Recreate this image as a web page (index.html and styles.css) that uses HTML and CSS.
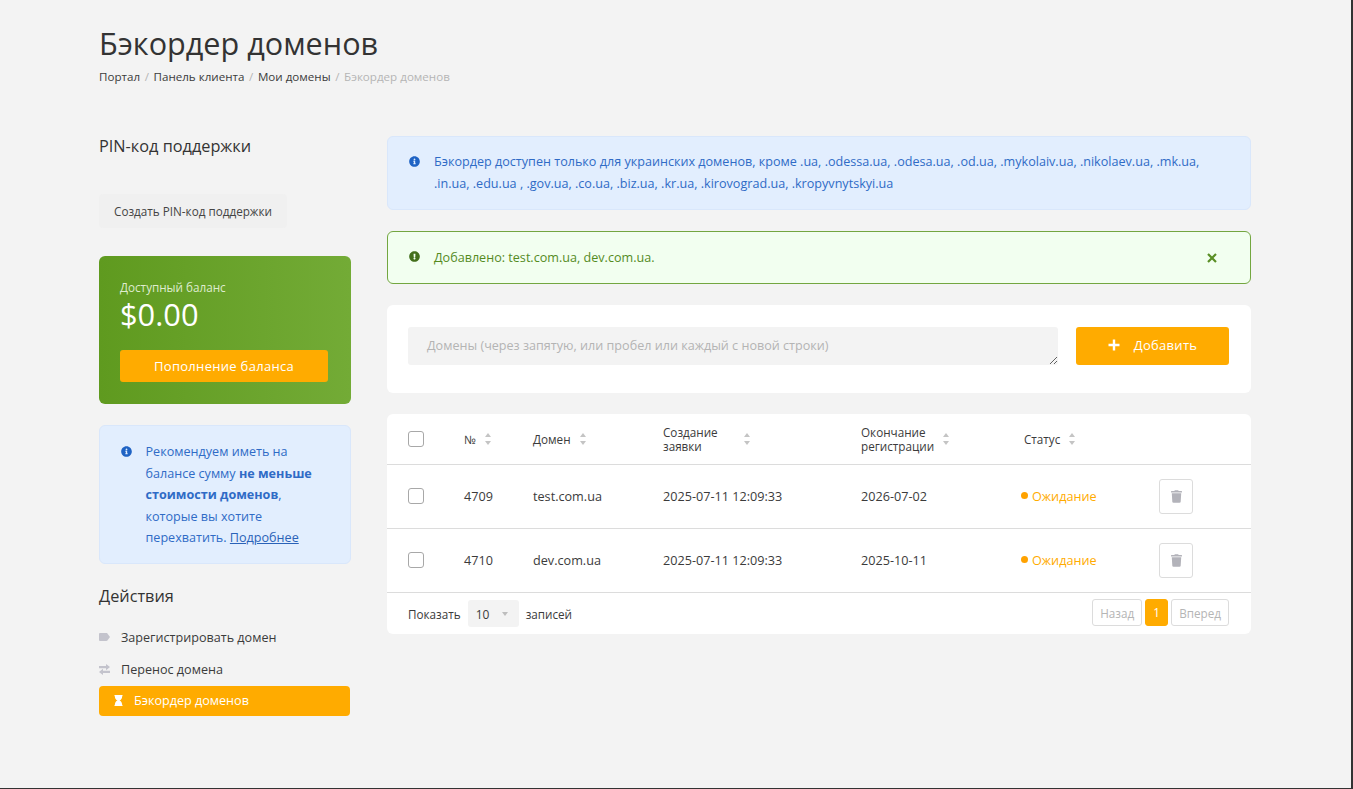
FILE: index.html
```html
<!DOCTYPE html>
<html lang="ru">
<head>
<meta charset="utf-8">
<title>Бэкордер доменов</title>
<link rel="stylesheet" href="styles.css">
</head>
<body>
<div class="page">
  <header class="head">
    <h1 class="title">Бэкордер доменов</h1>
    <nav class="crumbs">
      <a>Портал</a><span class="sep">/</span><a>Панель клиента</a><span class="sep">/</span><a>Мои домены</a><span class="sep">/</span><span class="cur">Бэкордер доменов</span>
    </nav>
  </header>
  <div class="layout">
    <aside class="side">
      <h2 class="side-h pin-h">PIN-код поддержки</h2>
      <button class="pin-btn">Создать PIN-код поддержки</button>
      <section class="balance">
        <div class="bal-label">Доступный баланс</div>
        <div class="bal-value">$0.00</div>
        <button class="bal-btn">Пополнение баланса</button>
      </section>
      <section class="side-note">
        <svg class="ic-info" viewBox="0 0 512 512"><path d="M256 8C119.043 8 8 119.083 8 256c0 136.997 111.043 248 248 248s248-111.003 248-248C504 119.083 392.957 8 256 8zm0 110c23.196 0 42 18.804 42 42s-18.804 42-42 42-42-18.804-42-42 18.804-42 42-42zm56 254c0 6.627-5.373 12-12 12h-88c-6.627 0-12-5.373-12-12v-24c0-6.627 5.373-12 12-12h12v-64h-12c-6.627 0-12-5.373-12-12v-24c0-6.627 5.373-12 12-12h64c6.627 0 12 5.373 12 12v100h12c6.627 0 12 5.373 12 12v24z"/></svg>
        <p>Рекомендуем иметь на балансе сумму <b>не меньше стоимости доменов</b>, которые вы хотите перехватить. <a>Подробнее</a></p>
      </section>
      <h2 class="side-h act-h">Действия</h2>
      <ul class="menu">
        <li class="mi">
          <svg class="mi-ic" viewBox="0 0 14 10"><path d="M1.2 0h8.3c.5 0 .9.2 1.2.5L14 5l-3.3 4.500c-.3.3-.7.5-1.200.5H1.200C.5 10 0 9.500 0 8.800V1.200C0 .5.5 0 1.200 0z"/></svg>
          <span>Зарегистрировать домен</span>
        </li>
        <li class="mi">
          <svg class="mi-ex" viewBox="0 0 11 11"><path d="M0 2h7V0l4 3.100-4 3.100V4.200H0zM11 6.800H4V4.800L0 7.900 4 11V9h7z"/></svg>
          <span>Перенос домена</span>
        </li>
        <li class="mi mi-active">
          <svg class="mi-glass" viewBox="0 0 384 512"><path d="M360 0H24C10.745 0 0 10.745 0 24v16c0 13.255 10.745 24 24 24 0 90.965 51.016 167.734 120.842 192C75.016 280.266 24 357.035 24 448c-13.255 0-24 10.745-24 24v16c0 13.255 10.745 24 24 24h336c13.255 0 24-10.745 24-24v-16c0-13.255-10.745-24-24-24 0-90.965-51.016-167.734-120.842-192C308.984 231.734 360 154.965 360 64c13.255 0 24-10.745 24-24V24c0-13.255-10.745-24-24-24z"/></svg>
          <span>Бэкордер доменов</span>
        </li>
      </ul>
    </aside>
    <main class="main">
      <div class="alert alert-info">
        <svg class="ic-info" viewBox="0 0 512 512"><path d="M256 8C119.043 8 8 119.083 8 256c0 136.997 111.043 248 248 248s248-111.003 248-248C504 119.083 392.957 8 256 8zm0 110c23.196 0 42 18.804 42 42s-18.804 42-42 42-42-18.804-42-42 18.804-42 42-42zm56 254c0 6.627-5.373 12-12 12h-88c-6.627 0-12-5.373-12-12v-24c0-6.627 5.373-12 12-12h12v-64h-12c-6.627 0-12-5.373-12-12v-24c0-6.627 5.373-12 12-12h64c6.627 0 12 5.373 12 12v100h12c6.627 0 12 5.373 12 12v24z"/></svg>
        <p>Бэкордер доступен только для украинских доменов, кроме .ua, .odessa.ua, .odesa.ua, .od.ua, .mykolaiv.ua, .nikolaev.ua, .mk.ua, .in.ua, .edu.ua , .gov.ua, .co.ua, .biz.ua, .kr.ua, .kirovograd.ua, .kropyvnytskyi.ua</p>
      </div>
      <div class="alert alert-ok">
        <svg class="ic-info ic-ok" viewBox="0 0 512 512"><path d="M504 256c0 136.997-111.043 248-248 248S8 392.997 8 256C8 119.083 119.043 8 256 8s248 111.083 248 248zm-248 50c-25.405 0-46 20.595-46 46s20.595 46 46 46 46-20.595 46-46-20.595-46-46-46zm-43.673-165.346l7.418 136c.347 6.364 5.609 11.346 11.982 11.346h48.546c6.373 0 11.635-4.982 11.982-11.346l7.418-136c.375-6.874-5.098-12.654-11.982-12.654h-63.383c-6.884 0-12.356 5.78-11.981 12.654z"/></svg>
        <p>Добавлено: test.com.ua, dev.com.ua.</p>
        <svg class="ic-close" viewBox="0 0 10 10"><path d="M1 1l8 8M9 1l-8 8"/></svg>
      </div>
      <form class="card add-form">
        <textarea class="domains" placeholder="Домены (через запятую, или пробел или каждый с новой строки)"></textarea>
        <button type="button" class="add-btn">
          <svg class="ic-plus" viewBox="0 0 12 12"><path d="M6 .5v11M.5 6h11"/></svg>
          <span>Добавить</span>
        </button>
      </form>
      <section class="card table-card">
        <table class="tbl">
          <colgroup>
            <col class="c-check"><col class="c-num"><col class="c-dom"><col class="c-created"><col class="c-end"><col class="c-status"><col class="c-act">
          </colgroup>
          <thead>
            <tr>
              <th><input type="checkbox" class="cb"></th>
              <th><div class="th"><span>№</span><i class="sort"></i></div></th>
              <th><div class="th"><span>Домен</span><i class="sort"></i></div></th>
              <th><div class="th"><span class="w-created">Создание заявки</span><i class="sort"></i></div></th>
              <th><div class="th"><span class="w-end">Окончание регистрации</span><i class="sort"></i></div></th>
              <th><div class="th th-status"><span>Статус</span><i class="sort"></i></div></th>
              <th></th>
            </tr>
          </thead>
          <tbody>
            <tr>
              <td><input type="checkbox" class="cb"></td>
              <td>4709</td>
              <td>test.com.ua</td>
              <td>2025-07-11 12:09:33</td>
              <td>2026-07-02</td>
              <td><span class="status">Ожидание</span></td>
              <td><button class="del"><svg viewBox="0 0 448 512"><path d="M432 32H312l-9.400-18.700A24 24 0 0 0 281.100 0H166.800a23.720 23.720 0 0 0-21.400 13.300L136 32H16A16 16 0 0 0 0 48v32a16 16 0 0 0 16 16h416a16 16 0 0 0 16-16V48a16 16 0 0 0-16-16zM53.200 467a48 48 0 0 0 47.900 45h245.800a48 48 0 0 0 47.900-45L416 128H32z"/></svg></button></td>
            </tr>
            <tr>
              <td><input type="checkbox" class="cb"></td>
              <td>4710</td>
              <td>dev.com.ua</td>
              <td>2025-07-11 12:09:33</td>
              <td>2025-10-11</td>
              <td><span class="status">Ожидание</span></td>
              <td><button class="del"><svg viewBox="0 0 448 512"><path d="M432 32H312l-9.400-18.700A24 24 0 0 0 281.100 0H166.800a23.720 23.720 0 0 0-21.400 13.300L136 32H16A16 16 0 0 0 0 48v32a16 16 0 0 0 16 16h416a16 16 0 0 0 16-16V48a16 16 0 0 0-16-16zM53.200 467a48 48 0 0 0 47.900 45h245.800a48 48 0 0 0 47.900-45L416 128H32z"/></svg></button></td>
            </tr>
          </tbody>
        </table>
        <div class="tfoot">
          <div class="show">
            <span class="lbl">Показать</span>
            <span class="sel">10<i class="caret"></i></span>
            <span class="lbl">записей</span>
          </div>
          <div class="pager">
            <span class="pg">Назад</span>
            <span class="pg pg-on">1</span>
            <span class="pg">Вперед</span>
          </div>
        </div>
      </section>
    </main>
  </div>
</div>
</body>
</html>
```

FILE: styles.css
```css
* { box-sizing: border-box; }
html, body { margin: 0; padding: 0; }
body {
  font-family: "Open Sans", "Noto Sans", sans-serif;
  font-size: 12.600px;
  color: #3b3b3b;
  background: #f3f3f3;
}
.page {
  height: 789px;
  padding: 21px 2px 0 99px;
  border-right: 2px solid #333;
  border-bottom: 1px solid #333;
  overflow: hidden;
}
.title {
  margin: 0;
  font-size: 30.600px;
  font-weight: 400;
  line-height: 44px;
  color: #333;
}
.crumbs {
  margin-top: 3px;
  font-size: 11.600px;
  line-height: 17px;
  color: #3b3b3b;
}
.sep { margin: 0 4.600px; color: #b5b5b5; }
.cur { color: #b5b5b5; }
.layout {
  display: flex;
  gap: 36px;
  width: 1152px;
  margin-top: 51px;
}
.side { width: 252px; flex: none; }
.main { width: 864px; flex: none; display: flex; flex-direction: column; gap: 21px; }
.side-h {
  margin: 0;
  font-size: 16.300px;
  font-weight: 400;
  line-height: 22px;
  color: #333;
}
.pin-h { margin-top: -1px; }
.pin-btn {
  display: block;
  margin-top: 37px;
  width: 188px;
  height: 34px;
  padding: 0;
  border: 0;
  border-radius: 4px;
  background: #f0f0f0;
  font: 11.700px "Open Sans", sans-serif;
  color: #444;
}
.balance {
  margin-top: 28px;
  height: 148px;
  padding: 23px 23px 0 21px;
  border-radius: 6px;
  background: linear-gradient(90deg, #5f9a1f 0%, #73ab36 100%);
  color: #fff;
}
.bal-label { font-size: 11.700px; line-height: 17px; color: #dfeccf; }
.bal-value { font-size: 30.800px; line-height: 40px; margin-top: -2px; }
.bal-btn {
  display: block;
  width: 100%;
  height: 32px;
  margin-top: 16px;
  border: 0;
  border-radius: 3px;
  background: #ffab00;
  color: #fff;
  font: 13px "Open Sans", sans-serif;
  letter-spacing: .3px;
}
.side-note {
  display: flex;
  gap: 13.500px;
  margin-top: 21px;
  height: 139px;
  padding: 15px 20px 0 21px;
  border: 1px solid #d9e7fb;
  border-radius: 6px;
  background: #e2eefe;
  color: #2f6bc6;
}
.side-note .ic-info { margin-top: 5px; }
.side-note p { margin: 0; line-height: 21.500px; }
.side-note a { text-decoration: underline; color: #2a62b8; }
.ic-info { width: 11px; height: 11px; flex: none; fill: #1f63c4; }
.act-h { margin-top: 21px; }
.menu { list-style: none; margin: 14px 0 0; padding: 0; }
.mi {
  display: flex;
  align-items: center;
  gap: 11px;
  width: 251px;
  height: 32px;
  color: #3b3b3b;
}
.mi-ic { width: 11px; height: 8px; flex: none; fill: #c3c3cc; }
.mi-ex { width: 11px; height: 11px; flex: none; fill: #c3c3cc; }
.mi-active {
  height: 30px;
  margin-top: 1px;
  padding: 0 0 2px 15px;
  gap: 11px;
  border-radius: 4px;
  background: #ffab00;
  color: #fff;
}
.mi-glass { width: 9px; height: 11px; flex: none; fill: #fff; }
.alert {
  display: flex;
  width: 864px;
  border-radius: 6px;
}
.alert p { margin: 0; }
.alert-info {
  gap: 14px;
  height: 74px;
  padding: 14px 40px 0 21px;
  border: 1px solid #d9e7fb;
  background: #e2eefe;
  color: #2f6bc6;
}
.alert-info p { line-height: 22px; }
.alert-info .ic-info { margin-top: 5px; }
.alert-ok {
  gap: 14px;
  align-items: center;
  height: 53px;
  padding: 0 33px 0 21px;
  border: 1px solid #73a640;
  background: #f2fff0;
  color: #558b1f;
}
.ic-ok { fill: #436f1b; margin-top: -2px; }
.alert-ok p { flex: 1; }
.ic-close { width: 10px; height: 10px; stroke: #5a8f25; stroke-width: 2.200; fill: none; }
.card { background: #fff; border-radius: 6px; }
.add-form {
  display: flex;
  align-items: flex-start;
  gap: 18px;
  height: 88px;
  padding: 22px 22px 0 21px;
}
.domains {
  display: block;
  width: 650px;
  height: 38px;
  padding: 10px 19px 8px;
  border: 0;
  border-radius: 3px;
  background: #f3f3f3;
  font: 12.600px/18px "Open Sans", sans-serif;
  outline: none;
}
.domains::placeholder { color: #b4b4b4; opacity: 1; }
.add-btn {
  display: flex;
  align-items: center;
  justify-content: center;
  gap: 14px;
  width: 153px;
  height: 38px;
  padding: 0 0 2px;
  border: 0;
  border-radius: 3px;
  background: #ffab00;
  color: #fff;
  font: 13px "Open Sans", sans-serif;
  letter-spacing: .3px;
}
.ic-plus { width: 12px; height: 12px; stroke: #fff; stroke-width: 2.400; fill: none; }
.table-card { height: 220px; }
.tbl { width: 864px; table-layout: fixed; border-collapse: collapse; }
.c-check { width: 77px; }
.c-num { width: 69px; }
.c-dom { width: 130px; }
.c-created { width: 198px; }
.c-end { width: 160px; }
.c-status { width: 138px; }
.c-act { width: 92px; }
.tbl th, .tbl td {
  padding: 0;
  text-align: left;
  font-weight: 400;
  vertical-align: middle;
}
.tbl td { font-size: 12.650px; }
.tbl th { height: 50px; font-size: 11.700px; line-height: 14px; color: #3b3b3b; }
.tbl td { height: 64px; border-top: 1px solid #dcdcdc; }
.tbl tr > :first-child { padding-left: 21px; }
.tbl tbody tr:last-child td { border-bottom: 1px solid #dcdcdc; }
.cb {
  appearance: none;
  display: block;
  width: 16px;
  height: 16px;
  margin: 0;
  border: 1px solid #a8a8a8;
  border-radius: 3px;
  background: #fff;
}
.th { display: flex; align-items: center; gap: 9px; }
.th-status { padding-left: 3px; }
.w-created { width: 72px; }
.w-end { width: 73px; }
.sort { position: relative; display: block; width: 7px; height: 12px; flex: none; }
.sort::before, .sort::after {
  content: "";
  position: absolute;
  left: 0;
  border-left: 3.500px solid transparent;
  border-right: 3.500px solid transparent;
}
.sort::before { top: 0; border-bottom: 4.500px solid #c4c4c4; }
.sort::after { bottom: 0; border-top: 4.500px solid #c4c4c4; }
.status { position: relative; padding-left: 11px; color: #ffab00; }
.status::before {
  content: "";
  position: absolute;
  left: 0;
  top: 5px;
  width: 7px;
  height: 7px;
  border-radius: 50%;
  background: #ffa200;
}
.del {
  display: flex;
  align-items: center;
  justify-content: center;
  width: 34px;
  height: 35px;
  padding: 0;
  border: 1px solid #dcdcdc;
  border-radius: 3px;
  background: #fff;
}
.del svg { width: 11px; height: 13px; fill: #b3b3ba; }
.tfoot {
  display: flex;
  align-items: center;
  justify-content: space-between;
  height: 41px;
  padding: 0 22px 0 21px;
  font-size: 11.700px;
}
.show { display: flex; align-items: center; gap: 7px; }
.lbl { padding-top: 2px; }
.sel {
  position: relative;
  display: block;
  width: 51px;
  height: 27px;
  padding-left: 8px;
  border-radius: 3px;
  background: #f3f3f3;
  line-height: 29px;
  font-size: 12px;
}
.caret {
  position: absolute;
  left: 34px;
  top: 12px;
  border-left: 3px solid transparent;
  border-right: 3px solid transparent;
  border-top: 4px solid #bdbdbd;
}
.pager { display: flex; gap: 3px; margin-bottom: 2px; }
.pg {
  display: flex;
  align-items: center;
  justify-content: center;
  height: 27px;
  padding: 1px 7px 0;
  border: 1px solid #dcdcdc;
  border-radius: 3px;
  color: #b5b5b5;
}
.pg-on {
  width: 23px;
  padding: 0;
  border-color: #ffab00;
  background: #ffab00;
  color: #fff;
}
```
